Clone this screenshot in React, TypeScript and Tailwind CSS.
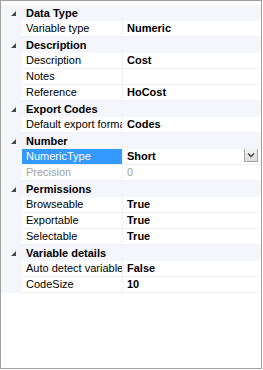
type Prop = { label: string; value?: string; selected?: boolean; disabled?: boolean; dropdown?: boolean };
type Group = { title: string; props: Prop[] };

const groups: Group[] = [
  { title: 'Data Type', props: [{ label: 'Variable type', value: 'Numeric' }] },
  {
    title: 'Description',
    props: [
      { label: 'Description', value: 'Cost' },
      { label: 'Notes' },
      { label: 'Reference', value: 'HoCost' },
    ],
  },
  { title: 'Export Codes', props: [{ label: 'Default export format', value: 'Codes' }] },
  {
    title: 'Number',
    props: [
      { label: 'NumericType', value: 'Short', selected: true, dropdown: true },
      { label: 'Precision', value: '0', disabled: true },
    ],
  },
  {
    title: 'Permissions',
    props: [
      { label: 'Browseable', value: 'True' },
      { label: 'Exportable', value: 'True' },
      { label: 'Selectable', value: 'True' },
    ],
  },
  {
    title: 'Variable details',
    props: [
      { label: 'Auto detect variable type', value: 'False' },
      { label: 'CodeSize', value: '10' },
    ],
  },
];

function Expander() {
  return (
    <svg width="5" height="5" viewBox="0 0 5 5" className="block">
      <polygon points="5,0 5,5 0,5" fill="#4a4a4a" />
    </svg>
  );
}

function DropButton() {
  return (
    <div className="absolute right-[3px] top-[-1px] flex h-[14px] w-[14px] items-center justify-center border border-[#a6a6a6] bg-gradient-to-b from-[#f2f2f2] to-[#dcdcdc]">
      <svg width="8" height="5" viewBox="0 0 8 5">
        <path d="M1 0.5 L4 3.5 L7 0.5" fill="none" stroke="#505050" strokeWidth="1.6" />
      </svg>
    </div>
  );
}

export default function App() {
  return (
    <div
      className="h-[369px] w-[262px] border border-[#a0a0a0] bg-white pt-[4px] text-[11px] leading-[15px] text-black"
      style={{ fontFamily: '"Liberation Sans", Arial, sans-serif' }}
    >
      {groups.map((g) => (
        <div key={g.title}>
          <div className="flex h-[16px] items-center bg-[#f5f5fc]">
            <div className="flex w-[21px] justify-end pr-[6px]">
              <Expander />
            </div>
            <div className="pl-[4px] font-bold">{g.title}</div>
          </div>
          {g.props.map((p) => (
            <div key={p.label} className="flex h-[16px]">
              <div className="w-[21px] shrink-0 bg-[#f5f5fc]" />
              <div
                className={
                  'w-[100px] shrink-0 overflow-hidden whitespace-nowrap border-b border-[#f0f0f6] pl-[4px] ' +
                  (p.selected ? 'bg-[#3399ff] text-white' : p.disabled ? 'text-[#a0a0a0]' : '')
                }
              >
                {p.label}
              </div>
              <div className="w-[1px] shrink-0 bg-[#f0f0f6]" />
              <div
                className={
                  'relative flex-1 overflow-hidden whitespace-nowrap border-b border-[#f0f0f6] pl-[4px] ' +
                  (p.disabled ? 'text-[#a0a0a0]' : 'font-bold')
                }
              >
                {p.value}
                {p.dropdown && <DropButton />}
              </div>
            </div>
          ))}
        </div>
      ))}
    </div>
  );
}
